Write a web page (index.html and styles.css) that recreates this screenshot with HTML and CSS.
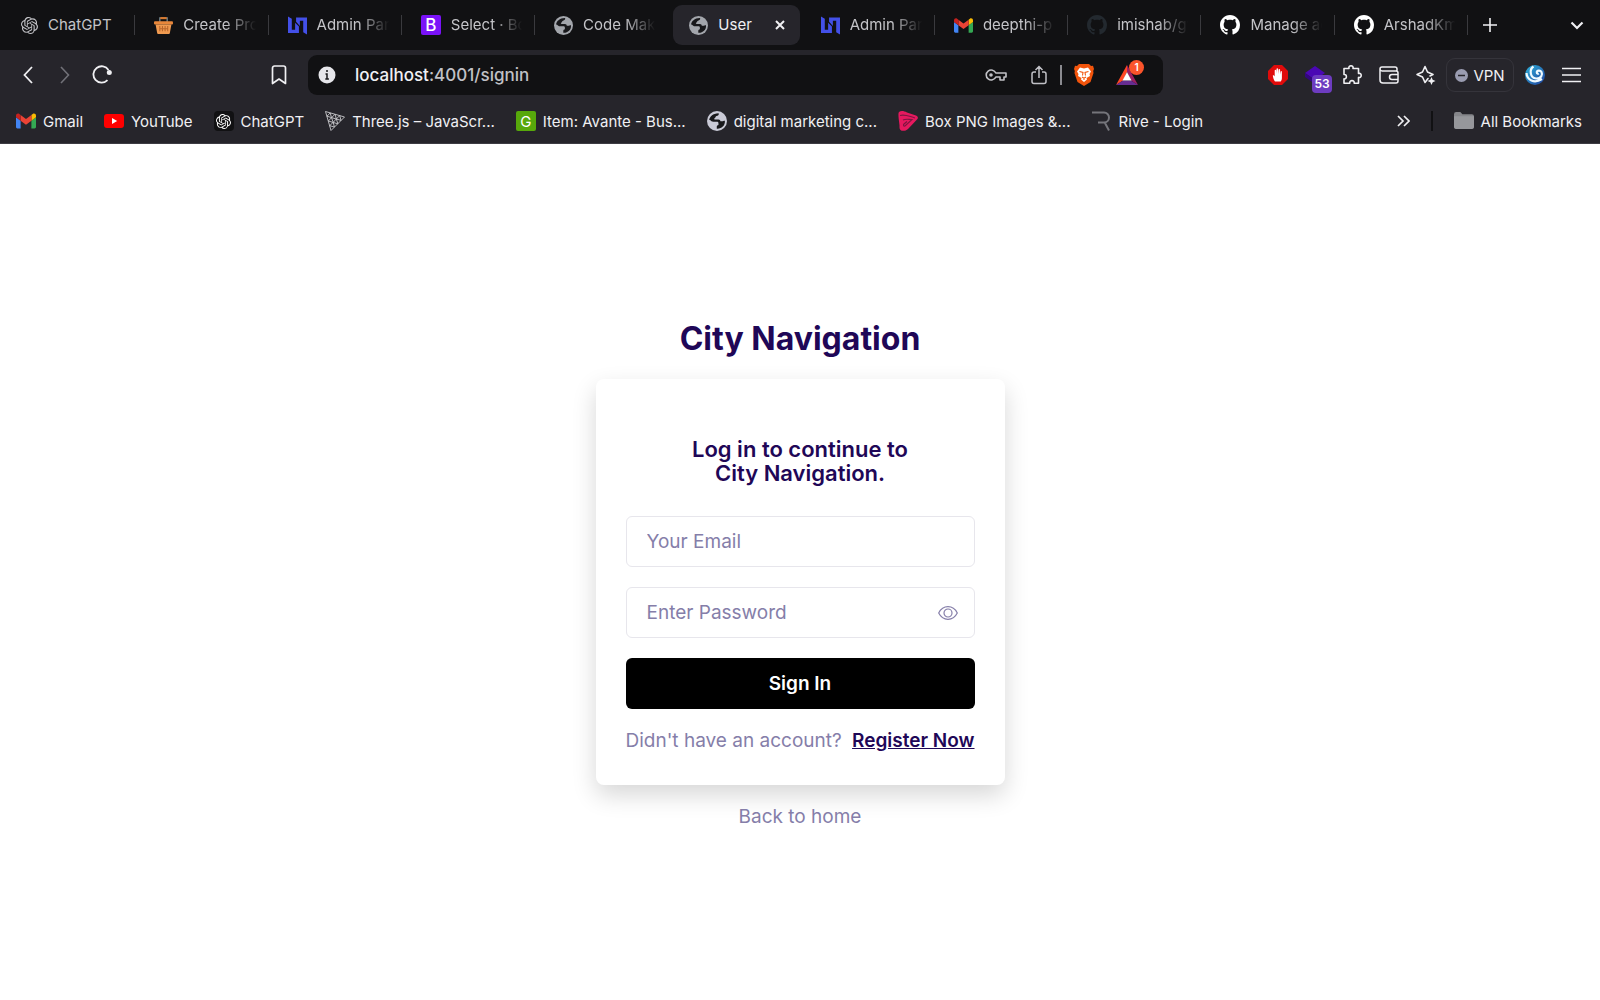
FILE: index.html
```html
<!DOCTYPE html>
<html lang="en">
<head>
<meta charset="utf-8">
<meta name="viewport" content="width=device-width, initial-scale=1">
<title>User</title>
<link rel="stylesheet" href="styles.css">
</head>
<body>
<svg class="sprite" aria-hidden="true">
  <symbol id="openai" viewBox="0 0 24 24"><path fill="currentColor" d="M22.2819 9.8211a5.9847 5.9847 0 0 0-.5157-4.9108 6.0462 6.0462 0 0 0-6.5098-2.9A6.0651 6.0651 0 0 0 4.9807 4.1818a5.9847 5.9847 0 0 0-3.9977 2.9 6.0462 6.0462 0 0 0 .7427 7.0966 5.98 5.98 0 0 0 .511 4.9107 6.051 6.051 0 0 0 6.5146 2.9001A5.9847 5.9847 0 0 0 13.2599 24a6.0557 6.0557 0 0 0 5.7718-4.2058 5.9894 5.9894 0 0 0 3.9977-2.9001 6.0557 6.0557 0 0 0-.7475-7.0729zm-9.022 12.6081a4.4755 4.4755 0 0 1-2.8764-1.0408l.1419-.0804 4.7783-2.7582a.7948.7948 0 0 0 .3927-.6813v-6.7369l2.02 1.1686a.071.071 0 0 1 .038.052v5.5826a4.504 4.504 0 0 1-4.4945 4.4944zm-9.6607-4.1254a4.4708 4.4708 0 0 1-.5346-3.0137l.142.0852 4.783 2.7582a.7712.7712 0 0 0 .7806 0l5.8428-3.3685v2.3324a.0804.0804 0 0 1-.0332.0615L9.74 19.9502a4.4992 4.4992 0 0 1-6.1408-1.6464zM2.3408 7.8956a4.485 4.485 0 0 1 2.3655-1.9728V11.6a.7664.7664 0 0 0 .3879.6765l5.8144 3.3543-2.0201 1.1685a.0757.0757 0 0 1-.071 0l-4.8303-2.7865A4.504 4.504 0 0 1 2.3408 7.872zm16.5963 3.8558L13.1038 8.364 15.1192 7.2a.0757.0757 0 0 1 .071 0l4.8303 2.7913a4.4944 4.4944 0 0 1-.6765 8.1042v-5.6772a.79.79 0 0 0-.407-.667zm2.0107-3.0231l-.142-.0852-4.7735-2.7818a.7759.7759 0 0 0-.7854 0L9.409 9.2297V6.8974a.0662.0662 0 0 1 .0284-.0615l4.8303-2.7866a4.4992 4.4992 0 0 1 6.6802 4.66zM8.3065 12.863l-2.02-1.1638a.0804.0804 0 0 1-.038-.0567V6.0742a4.4992 4.4992 0 0 1 7.3757-3.4537l-.142.0805L8.704 5.459a.7948.7948 0 0 0-.3927.6813zm1.0976-2.3654l2.602-1.4998 2.6069 1.4998v2.9994l-2.5974 1.4997-2.6067-1.4997Z"/></symbol>
  <symbol id="github" viewBox="0 0 16 16"><path fill="currentColor" d="M8 0C3.58 0 0 3.58 0 8c0 3.54 2.29 6.53 5.47 7.59.4.07.55-.17.55-.38 0-.19-.01-.82-.01-1.49-2.01.37-2.53-.49-2.69-.94-.09-.23-.48-.94-.82-1.13-.28-.15-.68-.52-.01-.53.63-.01 1.08.58 1.23.82.72 1.21 1.87.87 2.33.66.07-.52.28-.87.51-1.07-1.78-.2-3.64-.89-3.64-3.95 0-.87.31-1.59.82-2.15-.08-.2-.36-1.02.08-2.12 0 0 .67-.21 2.2.82.64-.18 1.32-.27 2-.27s1.36.09 2 .27c1.53-1.04 2.2-.82 2.2-.82.44 1.1.16 1.92.08 2.12.51.56.82 1.27.82 2.15 0 3.07-1.87 3.75-3.65 3.95.29.25.54.73.54 1.48 0 1.07-.01 1.93-.01 2.2 0 .21.15.46.55.38A8.01 8.01 0 0 0 16 8c0-4.42-3.58-8-8-8z"/></symbol>
  <symbol id="globe" viewBox="0 0 18 18"><circle cx="9" cy="9" r="9" fill="currentColor"/><path fill="#18181b" d="M10.500 2C11 3.600 9.800 4.200 8.600 4.500 7.600 4.800 7.900 5.800 7 6.200 6.200 6.700 6.400 7.600 7.400 7.600h3c1.100 0 1.700.8 1.700 1.700h1.400c1 0 1.600-.7 2.600-.6.200 2.300-.5 4-1.900 5.300-1.400 1.300-3.200 2.100-5.400 1.900V14c0-.8.700-1.300 1.500-1.500v-1.600c0-.8-.6-1.200-1.400-1.200H5.600C4.400 9.700 3.600 9 2.900 8.200l-.9-.1C2.300 5.300 5.300 1.900 10.500 2z"/></symbol>
  <symbol id="gmail" viewBox="0 0 20 15"><path fill="#4285f4" d="M1.400 15H4.600V7.200L0 3.800v9.800C0 14.400.6 15 1.400 15z"/><path fill="#34a853" d="M15.400 15h3.200c.8 0 1.400-.6 1.400-1.400V3.800l-4.600 3.400z"/><path fill="#fbbc04" d="M15.400 1.400v5.800L20 3.800V2c0-1.700-1.900-2.600-3.300-1.600z"/><path fill="#ea4335" d="M4.600 7.200V1.400L10 5.400l5.400-4v5.800l-5.400 4z"/><path fill="#c5221f" d="M0 2v1.800l4.600 3.400V1.400L3.300.4C1.900-.6 0 .3 0 2z"/></symbol>
  <symbol id="panel" viewBox="0 0 20 19"><path fill="#4350e8" d="M0 0L4 2.500V14H7.500V6.500L11.500 10.500V17.500H0zM8.500 1H20V19L16 16.500V4.500H12.500V10L8.500 5.500z"/></symbol>
</svg>

<header class="browser">
  <nav class="tabs" aria-label="Tabs">
    <div class="tab-list">
      <a class="tab" href="#"><svg class="fav knot"><use href="#openai"/></svg><span class="tab-title">ChatGPT</span></a>
      <a class="tab" href="#"><svg class="fav" viewBox="0 0 18 18"><path d="M5.500 6V2h7v4" fill="none" stroke="#65747b" stroke-width="1.500"/><path d="M6 1h6v2H6z" fill="#d7792f"/><rect y="5" width="18" height="3" rx="1" fill="#e8873b"/><path d="M1.500 8h15L15 16a1 1 0 0 1-1 1H4a1 1 0 0 1-1-1z" fill="#f09a50"/><path d="M5.500 9.500v5M8 9.500v5M10.500 9.500v5M13 9.500v5M5 12h8" stroke="#b8652b"/></svg><span class="tab-title">Create Pro</span></a>
      <a class="tab" href="#"><svg class="fav"><use href="#panel"/></svg><span class="tab-title">Admin Pan</span></a>
      <a class="tab" href="#"><span class="letter purple">B</span><span class="tab-title">Select · Bo</span></a>
      <a class="tab no-rule" href="#"><svg class="fav gray"><use href="#globe"/></svg><span class="tab-title">Code Make</span></a>
      <div class="tab active"><svg class="fav gray"><use href="#globe"/></svg><span class="tab-title">User</span><button class="close" aria-label="Close tab"><svg width="10" height="10" viewBox="0 0 10 10"><path d="M1 1l8 8M9 1L1 9" stroke="currentColor" stroke-width="2"/></svg></button></div>
      <a class="tab" href="#"><svg class="fav"><use href="#panel"/></svg><span class="tab-title">Admin Pan</span></a>
      <a class="tab" href="#"><svg class="fav"><use href="#gmail"/></svg><span class="tab-title">deepthi-p</span></a>
      <a class="tab" href="#"><svg class="fav dim"><use href="#github"/></svg><span class="tab-title">imishab/gy</span></a>
      <a class="tab" href="#"><svg class="fav white"><use href="#github"/></svg><span class="tab-title">Manage ac</span></a>
      <a class="tab" href="#"><svg class="fav white"><use href="#github"/></svg><span class="tab-title">ArshadKm</span></a>
    </div>
    <div class="tab-tools">
      <button aria-label="New tab"><svg width="14" height="14" viewBox="0 0 14 14"><path d="M7 0v14M0 7h14" stroke="currentColor" stroke-width="1.600"/></svg></button>
      <button aria-label="Search tabs"><svg width="14" height="9" viewBox="0 0 14 9"><path d="M1.500 1.500L7 7l5.500-5.500" fill="none" stroke="currentColor" stroke-width="2.200"/></svg></button>
    </div>
  </nav>

  <div class="toolbar">
    <div class="nav-group">
      <button aria-label="Back"><svg width="10" height="18" viewBox="0 0 10 18"><path d="M9 1L1.500 9 9 17" fill="none" stroke="currentColor" stroke-width="1.800"/></svg></button>
      <button class="off" aria-label="Forward"><svg width="10" height="18" viewBox="0 0 10 18"><path d="M1 1l7.500 8L1 17" fill="none" stroke="currentColor" stroke-width="1.600"/></svg></button>
      <button aria-label="Reload"><svg width="20" height="20" viewBox="0 0 20 20"><path d="M15.500 15.200A8.200 8.200 0 1 1 16.500 5" fill="none" stroke="currentColor" stroke-width="1.800"/><circle cx="17.300" cy="7.500" r="2.500" fill="currentColor"/></svg></button>
      <button class="mark" aria-label="Bookmark this tab"><svg width="16" height="20" viewBox="0 0 16 20"><path d="M1.500 18.500V3a2 2 0 0 1 2-2h9a2 2 0 0 1 2 2v15.500L8 14z" fill="none" stroke="currentColor" stroke-width="1.700" stroke-linejoin="round"/></svg></button>
    </div>
    <div class="address">
      <svg width="18" height="18" viewBox="0 0 18 18"><circle cx="9" cy="9" r="8.500" fill="#e6e6ea"/><path d="M9 4v2M7.500 8H9v5M7.300 13h3.600" fill="none" stroke="#17171a" stroke-width="1.500"/></svg>
      <div class="url">localhost<span>:4001/signin</span></div>
      <button class="w43" aria-label="Passwords"><svg width="22" height="14" viewBox="0 0 22 14"><path d="M10.800 5A5 5 0 1 0 10.800 9H15v3h4V9h2V5z" fill="none" stroke="currentColor" stroke-width="1.600" stroke-linejoin="round"/><circle cx="6" cy="7" r="1.800" fill="currentColor"/></svg></button>
      <button class="w43" aria-label="Share"><svg width="16" height="20" viewBox="0 0 16 20"><path d="M5 7H3a2 2 0 0 0-2 2v7.500a2 2 0 0 0 2 2h10a2 2 0 0 0 2-2V9a2 2 0 0 0-2-2h-2M8 13V1.500M4.500 5L8 1.500 11.500 5" fill="none" stroke="currentColor" stroke-width="1.500"/></svg></button>
      <span class="rule"></span>
      <button class="w43" aria-label="Brave Shields"><svg width="20" height="22" viewBox="0 0 20 22"><path d="M5 0h10l2 2 2-.3L20 5l-.8 2 .3 2-3 9L10 22l-6.500-4-3-9 .3-2L0 5l1-3.300L3 2z" fill="#f2540c"/><path d="M6 3.500L10 4.500 14 3.500 17 7.500 15.500 10 16 12 12.500 14 13 15.500 10 18 7 15.500 7.500 14 4 12 4.500 10 3 7.500z" fill="#fff"/><path d="M5.500 7.500L9 8.500 8.500 11.500M14.500 7.500L11 8.500l.5 3M8 13l2 1.200 2-1.200M10 14v2" fill="none" stroke="#f2540c" stroke-width="1.100"/></svg></button>
      <button class="w43 rewards" aria-label="Brave Rewards"><svg width="22" height="20" viewBox="0 0 22 20"><path d="M11 0L0 20 7 15.500 11 7z" fill="#ff4724"/><path d="M11 0l11 20-7-4.500L11 7z" fill="#9e1f63"/><path d="M0 20h22l-7-4.500H7z" fill="#662d91"/><path d="M11 7l4.500 8.500h-9z" fill="#fff"/></svg><b class="count">1</b></button>
    </div>
    <div class="actions">
      <button aria-label="Ad blocker"><svg width="20" height="20" viewBox="0 0 20 20"><path d="M6 0h8l6 6v8l-6 6H6l-6-6V6z" fill="#e00b0b"/><path d="M7 16.500C5.800 15 5 12.500 4.800 10.500c.7-.6 1.400 0 1.900 1V5.500c0-1 1.400-1 1.500 0V9l.3-5c0-1 1.500-1 1.600 0v5l.5-4.300c.1-1 1.500-.9 1.500.1V9.500l.5-2.800c.2-.9 1.400-.7 1.300.2V13c0 1.500-.5 2.500-1.200 3.500z" fill="#fff"/></svg></button>
      <button class="ext" aria-label="Extension, 53 items"><svg width="20" height="18" viewBox="0 0 20 18"><path d="M10 0l10 7-10 7L0 7z" fill="#4a07b4"/><path d="M0 7l10 7v4L0 11z" fill="#33067f"/></svg><b class="count">53</b></button>
      <button aria-label="Extensions"><svg width="20" height="20" viewBox="0 0 20 20"><path d="M2 3.500h5C6.500 1.800 7.500.8 9 .8s2.500 1 2 2.700h5.500v5c1.600-.5 2.700.5 2.700 1.900s-1.100 2.500-2.700 2v5.800h-4.300c.2-1.500-.7-2.600-2.200-2.600s-2.400 1.100-2.200 2.600H2v-4.300c1.400.2 2.400-.7 2.400-2.200S3.400 9.300 2 9.500z" fill="none" stroke="currentColor" stroke-width="1.600" stroke-linejoin="round"/></svg></button>
      <button aria-label="Wallet"><svg width="20" height="18" viewBox="0 0 20 18"><path d="M18 5V3a2 2 0 0 0-2-2H3a2 2 0 0 0-2 2v11a3 3 0 0 0 3 3h13a2 2 0 0 0 2-2V7a2 2 0 0 0-2-2H3.500A2.300 2.300 0 0 1 1 3M19 8.500h-6a2.500 2.500 0 0 0 0 5h6" fill="none" stroke="currentColor" stroke-width="1.500"/></svg></button>
      <button aria-label="Leo AI"><svg width="20" height="20" viewBox="0 0 20 20"><path d="M12 13.500L9 17.500 6.500 12 1 9.500 6.500 7 9 1.500 11.500 7 17 9.500 14 11" fill="none" stroke="currentColor" stroke-width="1.600" stroke-linejoin="round" stroke-linecap="round"/><path d="M15.500 12l1.200 2.800 2.800 1.200-2.800 1.200-1.200 2.800-1.200-2.800-2.800-1.200 2.800-1.200z" fill="currentColor"/></svg></button>
      <button class="vpn"><svg width="13" height="13" viewBox="0 0 13 13"><circle cx="6.500" cy="6.500" r="6.500" fill="#9a9cb1"/><path d="M3 6.500h7" stroke="#26252b" stroke-width="1.500"/></svg>VPN</button>
      <button aria-label="Profile"><svg width="20" height="20" viewBox="0 0 20 20"><defs><linearGradient id="swirl" x2="1" y2="1"><stop stop-color="#2fb4dc"/><stop offset="1" stop-color="#1d3f9c"/></linearGradient></defs><circle cx="10" cy="10" r="10" fill="url(#swirl)"/><path d="M8.500 1.500C4 4.500 5 13 11 13.500c5 .3 7-3.500 5.500-6.500-1.300-2.200-4.800-1.700-4.700.5 0 1 1 1.600 2 1M1.500 8C2 15 9 19 17 14" fill="none" stroke="#eefaff" stroke-width="2.200"/></svg></button>
      <button aria-label="Menu"><svg width="20" height="16" viewBox="0 0 20 16"><path d="M0 1.500h19M0 8h19M0 14.500h19" stroke="currentColor" stroke-width="1.700"/></svg></button>
    </div>
  </div>

  <nav class="bookmarks" aria-label="Bookmarks">
    <a href="#"><svg class="fav"><use href="#gmail"/></svg>Gmail</a>
    <a href="#"><svg class="fav" viewBox="0 0 20 14"><rect width="20" height="14" rx="3" fill="#f00"/><path d="M8 4l5.200 3L8 10z" fill="#fff"/></svg>YouTube</a>
    <a href="#"><span class="letter dark"><svg width="15" height="15"><use href="#openai"/></svg></span>ChatGPT</a>
    <a href="#"><svg class="fav" viewBox="0 0 20 20"><path d="M.5.500L19.500 6 6 19.500zM3.300 10L10 3.200l2.800 9.600zM2 5.200l3.200-3.300L6.500 6.600zM4.700 14.700L8.200 11.300l1.200 4.700zM11.300 8L14.700 4.600 16 9.400zM6.500 6.600l1.700 4.700L11.300 8z" fill="none" stroke="#c9c9cd" stroke-width=".9"/></svg>Three.js – JavaScr...</a>
    <a href="#"><span class="letter green">G</span>Item: Avante - Bus...</a>
    <a href="#"><svg class="fav light"><use href="#globe"/></svg>digital marketing c...</a>
    <a href="#"><svg class="fav" viewBox="0 0 20 20"><path d="M1 1C3-.5 6 0 9 1.500L18 4.500c2 .8 2.500 2.500 1 4L10 18c-2 2-6 2.500-7.500 1-1.200-1.500-1-3-1-5S-.5 3 1 1z" fill="#e6195f"/><path d="M2 4.500C7 3 10 5 17 7M5 9c3-1.500 6-.5 9-.5L7 15c-1.500.5-2-1-1-2l3-2.500" fill="none" stroke="#7d1640" stroke-width="1.100"/></svg>Box PNG Images &amp;...</a>
    <a href="#"><svg class="fav" viewBox="0 0 20 20"><path d="M1 1.500h12a5 5 0 0 1 0 10H7M14 12l4 7.500" fill="none" stroke="#75757b" stroke-width="2"/></svg>Rive - Login</a>
    <button class="more" aria-label="More bookmarks"><svg width="13" height="12" viewBox="0 0 13 12"><path d="M1 1l5 5-5 5M7 1l5 5-5 5" fill="none" stroke="currentColor" stroke-width="1.700"/></svg></button>
    <span class="split"></span>
    <a href="#"><svg class="fav" viewBox="0 0 19 17"><path d="M0 2a2 2 0 0 1 2-2h4l2 2h9a2 2 0 0 1 2 2v10a2 2 0 0 1-2 2H2a2 2 0 0 1-2-2z" fill="#85868a"/><path d="M0 4h19v10a2 2 0 0 1-2 2H2a2 2 0 0 1-2-2z" fill="#96979b"/></svg>All Bookmarks</a>
  </nav>
</header>

<main class="page">
  <h1>City Navigation</h1>
  <form class="card">
    <h2>Log in to continue to<br>City Navigation.</h2>
    <input class="field" type="email" placeholder="Your Email" aria-label="Your Email">
    <div class="field password">
      <input type="password" placeholder="Enter Password" aria-label="Enter Password">
      <button type="button" aria-label="Show password"><svg width="20" height="14" viewBox="0 0 20 14"><path d="M.7 7C2.500 3.500 5.500.7 10 .7S17.500 3.500 19.300 7C17.500 10.500 14.500 13.300 10 13.300S2.500 10.500.7 7z" fill="none" stroke="currentColor" stroke-width="1.200"/><circle cx="10" cy="7" r="4" fill="none" stroke="currentColor" stroke-width="1.200"/></svg></button>
    </div>
    <button class="submit" type="button">Sign In</button>
    <p class="register"><span>Didn't have an account?</span><a href="#">Register Now</a></p>
  </form>
  <a class="home" href="#">Back to home</a>
</main>
</body>
</html>
```
FILE: styles.css
```css
* { box-sizing: border-box; }

body {
  margin: 0;
  min-height: 100vh;
  display: flex;
  flex-direction: column;
  background: #fff;
  font-family: Inter, "Liberation Sans", sans-serif;
}

a { color: inherit; text-decoration: none; }

button {
  display: flex;
  align-items: center;
  justify-content: center;
  padding: 0;
  border: 0;
  background: none;
  color: inherit;
  font: inherit;
}

svg { display: block; flex: none; }
.sprite { position: absolute; width: 0; height: 0; }

/* Browser chrome */
.browser {
  background: #26252b;
  color: #f0f0f3;
  font-size: 15px;
  border-bottom: 1px solid #3d3c43;
}

.fav { width: 20px; height: 20px; }
.gray { color: #a3a6ac; }
.light { color: #c9cad6; }
.white { color: #fff; }
.dim { color: #23292f; }

.letter {
  display: flex;
  align-items: center;
  justify-content: center;
  flex: none;
  width: 20px;
  height: 20px;
  border-radius: 2px;
  color: #fff;
}
.purple { background: #7a12f8; font-size: 17px; font-weight: 500; }
.green { background: #57a80b; }
.dark { background: #111113; border-radius: 4px; }

.tabs { display: flex; height: 50px; background: #111113; }
.tab-list {
  flex: 1;
  min-width: 0;
  display: grid;
  grid-auto-flow: column;
  grid-auto-columns: minmax(0, 1fr);
  align-items: center;
  padding-left: 2px;
}

.tab {
  height: 20px;
  display: flex;
  align-items: center;
  gap: 10px;
  padding: 0 8px 0 19px;
  border-right: 1px solid #3a3a3e;
  color: #c4c4c8;
}
.tab .fav { width: 19px; height: 19px; }
.tab .knot { width: 17px; height: 17px; }
.tab .white, .tab .dim { width: 20px; height: 20px; }
.no-rule { border-color: transparent; }
.tab-title {
  flex: 1;
  min-width: 0;
  white-space: nowrap;
  line-height: 20px;
  mask-image: linear-gradient(to right, #000 55%, transparent 95%);
}
.tab:first-child .tab-title { mask-image: none; }

.tab.active {
  height: 40px;
  margin: 0 2px 0 5px;
  padding: 0 15px 0 16px;
  border: 0;
  border-radius: 9px;
  background: #26252b;
  color: #f0f0f3;
}
.active .tab-title { mask-image: none; }
.tab-tools {
  width: 132px;
  display: flex;
  justify-content: space-between;
  padding: 0 16px 0 15px;
}

.toolbar { display: grid; grid-template-columns: 308px 1fr 437px; height: 50px; align-items: center; }
.nav-group { display: flex; padding: 0 11px 0 9px; }
.nav-group button, .actions button { width: 37px; height: 40px; }
.nav-group .off { color: #717178; }
.nav-group .mark { margin-left: auto; }

.address {
  display: flex;
  align-items: center;
  height: 40px;
  padding: 0 15px 0 10px;
  border-radius: 9px;
  background: #111113;
}
.url { flex: 1; padding-left: 19px; font-size: 17px; font-weight: 500; }
.url span { color: #c1c1c6; }
.address .w43 { width: 43px; height: 40px; color: #c1c1c6; }
.rule { width: 2px; height: 20px; background: #8b8b90; }

.rewards, .ext { position: relative; }
.count { position: absolute; font-weight: 600; color: #fff; }
.rewards .count {
  top: 5px;
  right: 4px;
  width: 15px;
  height: 15px;
  border-radius: 50%;
  background: #fb542b;
  font-size: 10px;
  line-height: 15px;
}
.ext .count {
  top: 20px;
  right: 1px;
  width: 20px;
  height: 18px;
  border-radius: 4px;
  background: #6d3cc0;
  font-size: 12px;
  line-height: 18px;
}

.actions { display: flex; justify-content: flex-end; align-items: center; padding-right: 10px; }
.actions .vpn {
  width: 68px;
  height: 34px;
  margin: 0 2px;
  gap: 5px;
  border: 1px solid #35343b;
  border-radius: 9px;
}

.bookmarks {
  display: flex;
  align-items: center;
  gap: 21px;
  height: 43px;
  padding: 0 18px 1px 16px;
}
.bookmarks a { display: flex; align-items: center; gap: 7px; white-space: nowrap; }
.more { margin-left: auto; }
.split { width: 2px; height: 20px; background: #111113; }

/* Sign-in page */
.page {
  flex: 1;
  display: flex;
  flex-direction: column;
  align-items: center;
  justify-content: center;
  gap: 20px;
  padding-top: 4px;
  color: #1f0757;
  font-size: 19px;
  line-height: 24px;
}
h1 { margin: 0; font-size: 32px; line-height: 40px; font-weight: 700; }

.card {
  display: flex;
  flex-direction: column;
  gap: 20px;
  width: 100%;
  max-width: 409px;
  padding: 58px 30px 32px;
  border-radius: 8px;
  background: #fff;
  box-shadow: 0 10px 24px rgba(0, 0, 0, .16);
}
h2 { margin: 0 0 11px; font-size: 22px; line-height: 24px; font-weight: 600; text-align: center; }

.field {
  width: 100%;
  height: 51px;
  padding: 0 20px;
  border: 1px solid #e7e6ec;
  border-radius: 6px;
  background: #fff;
  color: #1f0757;
  font: inherit;
}
.password { display: flex; align-items: center; padding-right: 16px; }
.password input {
  flex: 1;
  min-width: 0;
  padding: 0;
  border: 0;
  background: none;
  color: inherit;
  font: inherit;
}
.password button { color: #857ea9; }
::placeholder { color: #857ea9; opacity: 1; }

.submit { height: 51px; border-radius: 6px; background: #000; color: #fff; font-weight: 600; }
.register { display: flex; justify-content: space-between; margin: 0; white-space: nowrap; color: #857ea9; }
.register a { color: #1f0757; font-weight: 600; text-decoration: underline; }
.home { color: #857ea9; }
```
